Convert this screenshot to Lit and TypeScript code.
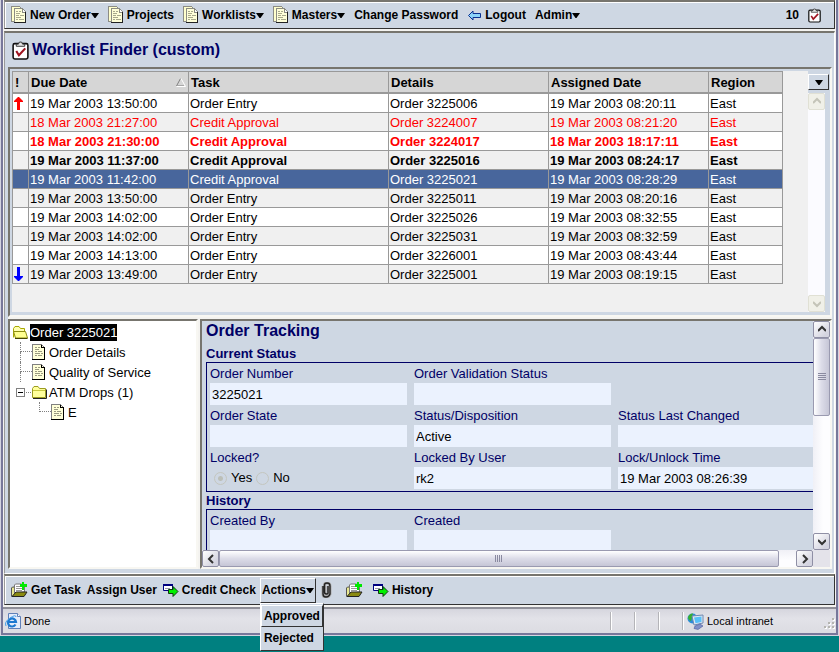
import { LitElement, html, css, svg, nothing, TemplateResult } from "lit";
import { customElement, property, state } from "lit/decorators.js";
import { classMap } from "lit/directives/class-map.js";

/* ---------- icons ---------- */

const docIcon = html`<svg width="15" height="18" viewBox="0 0 15 18" aria-hidden="true" shape-rendering="crispEdges">
  <path d="M0.500 0.500h8l2 2v13h-10z" fill="#ffffcc" stroke="#8c8c84"/>
  <path d="M3.500 2.500h8l3 3v11h-11z" fill="#ffffd8" stroke="#8c8c84"/>
  <path d="M3 16.500h12M14.500 6v11" stroke="#222" fill="none"/>
  <path d="M11 3h1v1h1v1h1v1h-3z" fill="#fff"/>
  <path d="M11.500 3v3M11 6.500h3" stroke="#8c8c84" fill="none"/>
  <path d="M5 5.500h2M8 5.500h2M5 7.500h4M5 9.500h3M9 9.500h4M5 11.500h5M5 13.500h2M8 13.500h5" stroke="#a9a98c" fill="none"/>
</svg>`;

const pageIcon = html`<svg width="14" height="16" viewBox="0 0 14 16" aria-hidden="true" shape-rendering="crispEdges">
  <path d="M0.500 0.500h9l3 3v12h-12z" fill="#ffffd8" stroke="#808080"/>
  <path d="M9.500 0.500v3h3.500M12.500 4v11.500H0" fill="none" stroke="#000"/>
  <path d="M3 3.500h2M6 3.500h2M3 5.500h4M3 7.500h2M6 7.500h4M3 9.500h5M9 9.500h2M3 11.500h2M6 11.500h4" stroke="#9a9a80"/>
</svg>`;

const clipboardIcon = (size: number) => html`<svg width=${size} height=${size + 2} viewBox="0 0 16 18" aria-hidden="true">
  <rect x="1" y="2.500" width="14" height="14.500" rx="1.500" fill="#fff" stroke="#111" stroke-width="1.500"/>
  <path d="M4 5V3h2l1-2h2l1 2h2v2z" fill="#e4e4e4" stroke="#333" stroke-width="0.900"/>
  <path d="M4 9.500l2.500 4 6-6.500" fill="none" stroke="#a01420" stroke-width="2"/>
</svg>`;

const backIcon = html`<svg width="14" height="11" viewBox="0 0 14 11" aria-hidden="true">
  <path d="M1.500 5.500l4.500-4.500v2.500h7.500v4H6V10z" fill="#8cd4fa" stroke="#0a3090" stroke-width="1"/>
</svg>`;

const getIcon = html`<svg width="17" height="16" viewBox="0 0 17 16" aria-hidden="true">
  <path d="M0.500 14.500V6l1-1H3l1 1" fill="#d8d870" stroke="#555"/>
  <path d="M1 6h3v5l-3 3z" fill="#e8e890"/>
  <path d="M3.500 11V3l1-1h6l3 3v5z" fill="#fff" stroke="#777"/>
  <path d="M5 4.500h4M5 6.500h6M5 8.500h6" stroke="#999"/>
  <path d="M1 14.500L5 10h11l-3 4.500z" fill="#8a8a10" stroke="#222"/>
  <path d="M11 0h2v2h3v3h-3v3h-2V5H9V2h2z" fill="#00e800"/>
</svg>`;

const flowIcon = html`<svg width="16" height="14" viewBox="0 0 16 14" aria-hidden="true">
  <path d="M0.500 1.500h9v6h-9z" fill="#fff" stroke="#000080"/>
  <path d="M0 1h10v2H0z" fill="#000080"/>
  <path d="M2 5.500h5" stroke="#99a"/>
  <path d="M5.500 6.500h4.500v-3l5 5-5 5v-3H5.500z" fill="#00f000" stroke="#103810"/>
</svg>`;

const clipIcon = html`<svg width="11" height="16" viewBox="0 0 11 16" aria-hidden="true">
  <path d="M2 4v8q0 3 3 3t4-3V4q0-3-3-3T3.500 4v6q0 2 2 2t1.500-2V4" fill="none" stroke="#aaa" stroke-width="3"/>
  <path d="M2 4v8q0 3 3 3t4-3V4q0-3-3-3T3.500 4v6q0 2 2 2t1.500-2V4" fill="none" stroke="#222" stroke-width="1.400"/>
</svg>`;

const folderIcon = html`<svg width="15" height="13" viewBox="0 0 15 13" aria-hidden="true">
  <path d="M0.500 11.500v-9l1.500-2h4l1.500 2h6v9z" fill="#ffff9c" stroke="#9c9c20"/>
  <path d="M1 4.500h12" fill="none" stroke="#c8c840"/>
  <path d="M1 12.500h13.500v-9" fill="none" stroke="#222"/>
</svg>`;

const openFolderIcon = html`<svg width="15" height="13" viewBox="0 0 15 13" aria-hidden="true">
  <path d="M0.500 11.500v-9l1.500-2h4l1.500 2h4v3" fill="#ffffb0" stroke="#a8a800"/>
  <path d="M0.500 5.500h12l2 6.500h-12z" fill="#ffff90" stroke="#8c8c10"/>
  <path d="M2 12.500h12.500" stroke="#444400"/>
</svg>`;

const ieIcon = html`<svg width="16" height="16" viewBox="0 0 16 16" aria-hidden="true">
  <path d="M3.500 0.500h9l3 3v12h-12z" fill="#e4ecfb" stroke="#6080b8"/>
  <path d="M12.500 0.500v3h3" fill="#fff" stroke="#6080b8"/>
  <path d="M10.500 11.500A4 4 0 1 1 11 9H4" fill="none" stroke="#1c78d0" stroke-width="2.200"/>
  <path d="M1 13Q-1 9 5 5t6-1" fill="none" stroke="#46a0e8" stroke-width="1"/>
</svg>`;

const intranetIcon = html`<svg width="17" height="17" viewBox="0 0 17 17" aria-hidden="true">
  <circle cx="5.500" cy="5.500" r="5" fill="#2c8cd8"/>
  <path d="M1 4q2-4 5-3.500L5 4l-1 4q-3-1-3-4z" fill="#38b030"/>
  <path d="M5 3l11-1v8l-9 2z" fill="#dfe8f4" stroke="#7088b0"/>
  <path d="M7 4.500l7.500-1v5.500l-6 1.200z" fill="#58c0f8"/>
  <path d="M8 13l5-2 3 2-5 3.500-4-1z" fill="#8090c8" stroke="#48589a" stroke-width=".6"/>
</svg>`;

const gripIcon = html`<svg width="12" height="12" viewBox="0 0 12 12" aria-hidden="true" shape-rendering="crispEdges">
  ${[[8, 0], [4, 4], [8, 4], [0, 8], [4, 8], [8, 8]].map(
    ([x, y]) => svg`<rect x=${x + 1} y=${y + 1} width="2" height="2" fill="#fff"/><rect x=${x} y=${y} width="2" height="2" fill="#b4b4b0"/>`
  )}
</svg>`;

const caret = html`<svg width="8" height="5" viewBox="0 0 8 5" aria-hidden="true"><path d="M0 0h8L4.500 5h-1z" fill="#000"/></svg>`;

const sortIcon = html`<svg width="10" height="9" viewBox="0 0 10 9" aria-hidden="true">
  <path d="M4.500 0.500L0.500 8" fill="none" stroke="#808080"/><path d="M0.500 8.500h9L5 0.500" fill="none" stroke="#fff"/><path d="M1 7.500h7" stroke="#a8a8a8"/>
</svg>`;

const priorityIcon = (up: boolean) => html`<svg width="11" height="15" viewBox="0 0 11 15" role="img" aria-label=${up ? "High" : "Low"}>
  <path d=${up ? "M3 14V6H0V5l4-4h1l4 4v1H6v8z" : "M3 0v9H0v1l4 4h1l4-4V9H6V0z"} fill=${up ? "#f00" : "#00f"}/>
</svg>`;

/* ---------- scroll bar ---------- */

@customElement("scroll-bar")
export class ScrollBar extends LitElement {
  @property({ type: Boolean, reflect: true }) horizontal = false;
  @property({ type: Boolean, reflect: true }) inactive = false;
  @property({ type: Number }) span = 0;

  static styles = css`
    :host { display: flex; flex-direction: column; background: linear-gradient(90deg, #f0f0f6, #fdfdff 60%); }
    :host([horizontal]) { flex-direction: row; background: linear-gradient(#f0f0f6, #fdfdff 60%); }
    :host([inactive]) { background: #fbfbff; }
    .end {
      flex: none; width: 17px; height: 17px; padding: 0; display: grid; place-items: center;
      border: 1px solid #8f8fa5; border-radius: 2px; box-sizing: border-box;
      background: linear-gradient(135deg, #fff, #d4d4e0 80%); color: #333;
    }
    :host([inactive]) .end { background: #f0f0e8; border-color: #e0e0d4; color: #c4c4b8; }
    .track { flex: 1; min-width: 0; min-height: 0; display: flex; flex-direction: inherit; }
    .thumb {
      display: grid; place-items: center; box-sizing: border-box; color: #8a8aa0;
      border: 1px solid #9a9ab0; border-radius: 2px; background: linear-gradient(90deg, #fff, #dcdce8 50%, #c6c6d6);
    }
    :host([horizontal]) .thumb { background: linear-gradient(#fff, #dcdce8 50%, #c6c6d6); }
  `;

  render() {
    const [back, forth] = this.horizontal ? ["M6 1L2 5l4 4", "M2 1l4 4-4 4"] : ["M0 6l4-4 4 4", "M0 3l4 4 4-4"];
    const arrow = (d: string) => html`<svg width="8" height="10" viewBox="0 0 8 10" aria-hidden="true"><path d=${d} fill="none" stroke="currentColor" stroke-width="2"/></svg>`;
    const size = `${this.horizontal ? "width" : "height"}:${this.span}%`;
    return html`
      <button class="end" aria-label="Scroll back" ?disabled=${this.inactive}>${arrow(back)}</button>
      <div class="track">
        ${this.span
          ? html`<div class="thumb" style=${size}>
              <svg width="8" height="8" viewBox="0 0 8 8" aria-hidden="true">
                <path d=${this.horizontal ? "M.5 0v7M2.500 0v7M4.500 0v7M6.500 0v7" : "M0 .5h8M0 2.500h8M0 4.500h8M0 6.500h8"} stroke="currentColor"/>
              </svg>
            </div>`
          : nothing}
      </div>
      <button class="end" aria-label="Scroll forward" ?disabled=${this.inactive}>${arrow(forth)}</button>
    `;
  }
}

/* ---------- work list ---------- */

interface Task {
  due: string; task: string; order: string; assigned: string;
  priority?: "high" | "low"; late?: boolean; unread?: boolean; selected?: boolean;
}

const tasks: Task[] = [
  { due: "13:50:00", task: "Order Entry", order: "3225006", assigned: "19 Mar 2003 08:20:11", priority: "high" },
  { due: "21:27:00", task: "Credit Approval", order: "3224007", assigned: "19 Mar 2003 08:21:20", late: true },
  { due: "21:30:00", task: "Credit Approval", order: "3224017", assigned: "18 Mar 2003 18:17:11", late: true, unread: true },
  { due: "11:37:00", task: "Credit Approval", order: "3225016", assigned: "19 Mar 2003 08:24:17", unread: true },
  { due: "11:42:00", task: "Credit Approval", order: "3225021", assigned: "19 Mar 2003 08:28:29", selected: true },
  { due: "13:50:00", task: "Order Entry", order: "3225011", assigned: "19 Mar 2003 08:20:16" },
  { due: "14:02:00", task: "Order Entry", order: "3225026", assigned: "19 Mar 2003 08:32:55" },
  { due: "14:02:00", task: "Order Entry", order: "3225031", assigned: "19 Mar 2003 08:32:59" },
  { due: "14:13:00", task: "Order Entry", order: "3226001", assigned: "19 Mar 2003 08:43:44" },
  { due: "13:49:00", task: "Order Entry", order: "3225001", assigned: "19 Mar 2003 08:19:15", priority: "low" },
];

@customElement("work-list")
export class WorkList extends LitElement {
  static styles = css`
    :host { display: grid; grid-template-columns: minmax(0, 1fr) 21px; padding: 2px 1px 3px 2px; background: #ced7e3; }
    .sheet { background: #f0f0f0; overflow: hidden; }
    table { table-layout: fixed; width: 771px; border-collapse: separate; border-spacing: 0; font-size: 13px; line-height: 16px; }
    .c-flag { width: 17px; }
    .c-date { width: 160px; }
    .c-task { width: 200px; }
    .c-region { width: 74px; }
    th, td { box-sizing: border-box; text-align: left; white-space: nowrap; overflow: hidden; border-right: 1px solid #999; }
    th { height: 23px; padding: 1px 2px 0; background: #d6d6d6; border-top: 1px solid #999; border-bottom: 2px solid #999; }
    td { height: 19px; padding: 1px 1px 0; border-bottom: 1px solid #999; }
    th:first-child, td:first-child { border-left: 1px solid #999; }
    .head { display: flex; justify-content: space-between; align-items: center; }
    .flag { display: flex; }
    .odd { background: #fff; }
    .late { color: #f00; }
    .unread { font-weight: bold; }
    .selected { background: #48669c; color: #fff; }
    .side { display: flex; flex-direction: column; padding-top: 3px; }
    .columns {
      height: 16px; margin-bottom: 3px; padding: 0; display: grid; place-items: center;
      background: #ced7e3; border: 1px solid #fff; border-right-color: #333; border-bottom-color: #333;
    }
    scroll-bar { flex: 1; width: 17px; }
  `;

  render() {
    return html`
      <div class="sheet">
        <table>
          <colgroup>
            <col class="c-flag"><col class="c-date"><col class="c-task"><col class="c-date"><col class="c-date"><col class="c-region">
          </colgroup>
          <thead>
            <tr><th>!</th><th><span class="head">Due Date ${sortIcon}</span></th><th>Task</th><th>Details</th><th>Assigned Date</th><th>Region</th></tr>
          </thead>
          <tbody>
            ${tasks.map((t, i) => html`
              <tr class=${classMap({ odd: i % 2 === 0, late: !!t.late, unread: !!t.unread, selected: !!t.selected })}>
                <td>${t.priority ? html`<span class="flag">${priorityIcon(t.priority === "high")}</span>` : nothing}</td>
                <td>${t.late ? 18 : 19} Mar 2003 ${t.due}</td>
                <td>${t.task}</td>
                <td>Order ${t.order}</td>
                <td>${t.assigned}</td>
                <td>East</td>
              </tr>`)}
          </tbody>
        </table>
      </div>
      <div class="side">
        <button class="columns" aria-label="Choose columns">${caret}</button>
        <scroll-bar inactive></scroll-bar>
      </div>
    `;
  }
}

/* ---------- order tree ---------- */

@customElement("order-tree")
export class OrderTree extends LitElement {
  static styles = css`
    :host { display: block; background: #fff; font-size: 13px; line-height: 17px; padding: 1px 3px; overflow: hidden; }
    ul { list-style: none; margin: 0; padding: 0; }
    .row { display: flex; align-items: center; height: 20px; gap: 3px; white-space: nowrap; }
    .row svg { flex: none; }
    .label { color: inherit; text-decoration: none; }
    .top, .node { gap: 2px; }
    .top .label { background: #000; color: #fff; }
    .kids { margin-left: 7px; }
    .kids li { display: grid; grid-template-columns: 12px minmax(0, 1fr); }
    .branch { display: grid; grid-template-rows: 10px 1fr; }
    .branch::before { content: ""; border-left: 1px dotted #808080; border-bottom: 1px dotted #808080; }
    .branch::after { content: ""; border-left: 1px dotted #808080; }
    .kids li:last-child > .branch::after { border-left: none; }
    .fold { display: grid; grid-template-columns: 9px 1fr; align-items: center; height: 20px; margin-left: -4px; }
    .toggle { width: 9px; height: 9px; padding: 0; border: 1px solid #808080; background: #fff; display: grid; place-items: center; }
    .fold::after { content: ""; border-top: 1px dotted #808080; margin: 0 1px; }
  `;

  render() {
    const leaf = (text: string) => html`<li><span class="branch"></span><span class="row">${pageIcon}<a class="label" href="#">${text}</a></span></li>`;
    return html`
      <div class="row top">${openFolderIcon}<a class="label" href="#">Order 3225021</a></div>
      <ul class="kids">
        ${leaf("Order Details")} ${leaf("Quality of Service")}
        <li>
          <span class="fold"><button class="toggle" aria-label="Collapse"><svg width="5" height="1" viewBox="0 0 5 1" aria-hidden="true"><path d="M0 .5h5" stroke="#000"/></svg></button></span>
          <div>
            <div class="row node">${folderIcon}<a class="label" href="#">ATM Drops (1)</a></div>
            <ul class="kids">${leaf("E")}</ul>
          </div>
        </li>
      </ul>
    `;
  }
}

/* ---------- order form ---------- */

@customElement("order-form")
export class OrderForm extends LitElement {
  static styles = css`
    :host { display: grid; grid-template: minmax(0, 1fr) 17px / minmax(0, 1fr) 17px; background: #e4e3ea; }
    .view { contain: size; overflow: hidden; background: #ced7e3; padding-left: 4px; color: #000066; font-size: 13px; }
    .page { width: 630px; }
    h1 { margin: 0 0 4px; font-size: 16px; line-height: 20px; }
    h2 { margin: 0; font-size: 13px; line-height: 17px; }
    .group { border: 1px solid #000066; display: grid; grid-template-columns: repeat(3, 197px); column-gap: 7px; padding: 0 3px 2px; }
    .field { display: grid; grid-template-rows: 20px 22px; border: 0; margin: 0; padding: 0; }
    .break { grid-column: 1; }
    label, .caption { line-height: 22px; padding: 0; }
    input[type="text"] {
      box-sizing: border-box; width: 100%; height: 22px; border: 0; margin: 0; padding: 0 2px;
      background: #ebf2fe; color: #000; font: 13px "Liberation Sans", Arial, sans-serif;
    }
    .choices { display: flex; align-items: center; gap: 4px; padding-left: 4px; color: #000; }
    input[type="radio"] {
      appearance: none; width: 13px; height: 13px; margin: 0; border: 1px solid #c4c6bf; border-radius: 50%;
    }
    input[type="radio"]:checked { background: radial-gradient(#bcbfb8 2px, transparent 3px); }
  `;

  private field(id: string, label: string, value = "", place = "") {
    return html`<div class="field ${place}"><label for=${id}>${label}</label><input type="text" id=${id} .value=${value} readonly></div>`;
  }

  render() {
    return html`
      <div class="view">
        <div class="page">
          <h1>Order Tracking</h1>
          <h2>Current Status</h2>
          <div class="group">
            ${this.field("number", "Order Number", "3225021")}
            ${this.field("validation", "Order Validation Status")}
            ${this.field("state", "Order State", "", "break")}
            ${this.field("disposition", "Status/Disposition", "Active")}
            ${this.field("changed", "Status Last Changed")}
            <div class="field" role="radiogroup" aria-labelledby="locked">
              <span class="caption" id="locked">Locked?</span>
              <div class="choices">
                <input type="radio" name="locked" id="yes" checked disabled><label for="yes">Yes</label>
                <input type="radio" name="locked" id="no" disabled><label for="no">No</label>
              </div>
            </div>
            ${this.field("user", "Locked By User", "rk2")}
            ${this.field("time", "Lock/Unlock Time", "19 Mar 2003 08:26:39")}
          </div>
          <h2>History</h2>
          <div class="group">${this.field("by", "Created By")} ${this.field("created", "Created")}</div>
        </div>
      </div>
      <scroll-bar span="40"></scroll-bar>
      <scroll-bar horizontal span="97"></scroll-bar>
    `;
  }
}

/* ---------- application ---------- */

@customElement("app-root")
export class AppRoot extends LitElement {
  @state() private menuOpen = true;

  static styles = css`
    :host {
      display: flex; flex-direction: column; box-sizing: border-box; min-height: 100vh; padding-bottom: 16px;
      background: #008080; color: #000; font-family: "Liberation Sans", Arial, sans-serif;
    }
    .window {
      flex: 1; display: flex; flex-direction: column; background: #f4f3f0;
      border: solid #77779a; border-width: 0 2px 2px; box-shadow: 0 0 0 1px #d4d4e0;
      margin: 0 1px 1px;
    }
    .bar {
      display: flex; align-items: center; gap: 9px; box-sizing: border-box; background: #ced7e3; padding: 0 6px;
      margin: 0 1px; border: 1px solid #333; border-top: 2px solid #77756e; border-left: 1px solid #999;
      box-shadow: inset 1px 1px 0 #fff;
    }
    .top { height: 29px; padding-right: 13px; margin-bottom: 2px; }
    .tool {
      display: flex; align-items: center; padding: 0; border: 0; background: none; color: #000; white-space: nowrap;
      font: bold 12px/16px "Liberation Sans", Arial, sans-serif;
    }
    .pic { display: flex; margin-right: 3px; }
    .top .pic { margin-right: 4px; }
    .count { margin-left: auto; display: flex; align-items: center; gap: 9px; font: bold 12px/16px "Liberation Sans", Arial, sans-serif; }
    .count svg { display: block; }
    .main {
      flex: 1; display: flex; flex-direction: column; background: #ced7e3; margin: 0 1px;
      border: solid #fff; border-width: 2px 1px 1px 1px; border-top-color: #77756e; border-left-color: #999; padding: 0 2px 4px 3px;
    }
    .title { display: flex; align-items: center; gap: 3px; height: 34px; padding: 0 4px; margin: 0; box-sizing: border-box; font-size: 16px; color: #000066; }
    .panes { flex: 1; display: grid; grid-template: minmax(0, 1fr) minmax(0, 1fr) / 190px minmax(0, 1fr); gap: 2px; background: #f4f3f0; }
    .pane { border: 2px solid #77756e; border-right-color: #f8f7f2; border-bottom-color: #f8f7f2; min-width: 0; }
    .list { grid-column: 1 / -1; }
    .bottom { height: 31px; margin-bottom: 2px; padding: 0 6px; gap: 6px; }
    .menu-host { position: relative; margin: 0 -1px 0 -2px; }
    .actions { height: 25px; padding: 0 1px; border: 1px solid #fff; border-right-color: #333; border-bottom-color: #333; }
    .menu {
      position: absolute; left: 0; top: 100%; z-index: 1; display: flex; flex-direction: column; width: 64px; box-sizing: border-box;
      background: #ced7e3; border: 1px solid #fff; border-right-color: #333; border-bottom-color: #333; padding: 1px 0;
    }
    .menu .tool { height: 22px; padding: 0 2px; border: 1px solid transparent; }
    .menu .current { border-color: #fff #333 #333 #fff; }
    .gap { margin: 0 4px 0 8px; }
    .status {
      display: flex; align-items: center; height: 26px; box-sizing: border-box; padding-left: 2px; font-size: 11px;
      border-top: 2px solid #8f8f98; background: linear-gradient(#d6d6de, #e2e2e8 40%, #dcdce2);
    }
    .cells { margin-left: auto; display: flex; }
    .cell { width: 24px; height: 18px; box-sizing: border-box; border-left: 1px solid #b4b4b8; box-shadow: inset 1px 0 0 #fff; }
    .zone { display: flex; align-items: center; width: 154px; height: 18px; box-sizing: border-box; border-left: 1px solid #b4b4b8; padding-left: 4px; box-shadow: inset 1px 0 0 #fff; }
    .grip { display: flex; margin-left: auto; align-self: flex-end; }
  `;

  private tool(text: string, icon?: TemplateResult, more = false) {
    return html`<button class="tool">${icon ? html`<span class="pic">${icon}</span>` : nothing}${text}${more ? caret : nothing}</button>`;
  }

  render() {
    return html`
      <div class="window">
        <nav class="bar top">
          ${this.tool("New Order", docIcon, true)} ${this.tool("Projects", docIcon)} ${this.tool("Worklists", docIcon, true)}
          ${this.tool("Masters", docIcon, true)} ${this.tool("Change Password")} ${this.tool("Logout", backIcon)}
          ${this.tool("Admin", undefined, true)}
          <span class="count">10 ${clipboardIcon(13)}</span>
        </nav>
        <main class="main">
          <h1 class="title">${clipboardIcon(17)} Worklist Finder (custom)</h1>
          <div class="panes">
            <work-list class="pane list"></work-list>
            <order-tree class="pane"></order-tree>
            <order-form class="pane"></order-form>
          </div>
        </main>
        <div class="bar bottom">
          ${this.tool("Get Task", getIcon)} ${this.tool("Assign User")} ${this.tool("Credit Check", flowIcon)}
          <div class="menu-host">
            <button class="tool actions" aria-expanded=${this.menuOpen} @click=${() => (this.menuOpen = !this.menuOpen)}>Actions${caret}</button>
            ${this.menuOpen
              ? html`<div class="menu" role="menu"><button class="tool current" role="menuitem">Approved</button><button class="tool" role="menuitem">Rejected</button></div>`
              : nothing}
          </div>
          <button class="tool" aria-label="Attachments">${clipIcon}</button>
          <button class="tool gap" aria-label="Add">${getIcon}</button>
          ${this.tool("History", flowIcon)}
        </div>
        <footer class="status">
          <span class="pic">${ieIcon}</span>Done
          <div class="cells">
            <span class="cell"></span><span class="cell"></span><span class="cell"></span>
            <span class="zone"><span class="pic">${intranetIcon}</span>Local intranet<span class="grip">${gripIcon}</span></span>
          </div>
        </footer>
      </div>
    `;
  }
}
